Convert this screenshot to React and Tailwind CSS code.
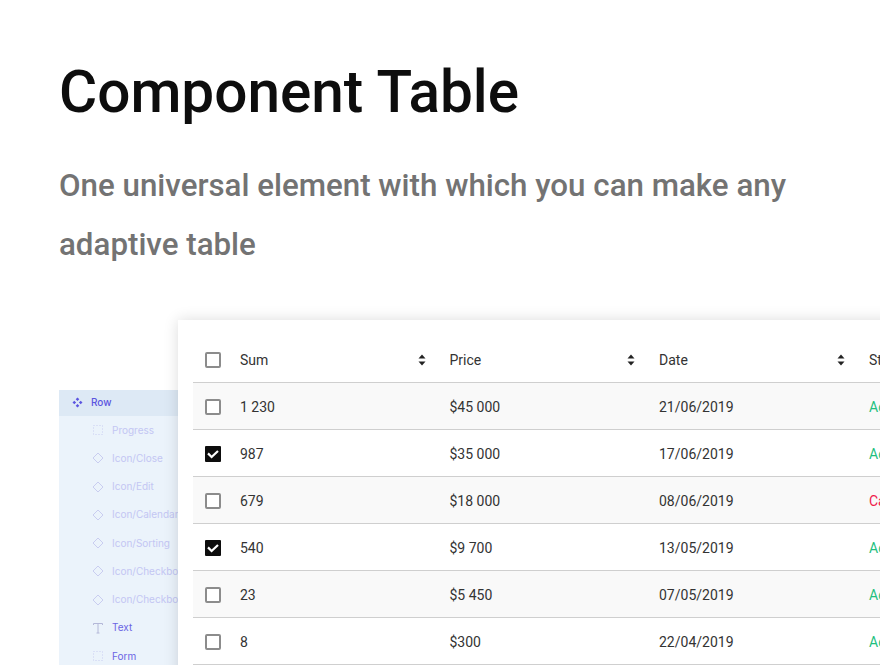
const layers = [
  { name: 'Progress', icon: 'dashed', faded: true },
  { name: 'Icon/Close', icon: 'diamond', faded: true },
  { name: 'Icon/Edit', icon: 'diamond', faded: true },
  { name: 'Icon/Calendar', icon: 'diamond', faded: true },
  { name: 'Icon/Sorting', icon: 'diamond', faded: true },
  { name: 'Icon/Checkbox', icon: 'diamond', faded: true },
  { name: 'Icon/Checkbox', icon: 'diamond', faded: true },
  { name: 'Text', icon: 'text' },
  { name: 'Form', icon: 'dashed' },
];

const rows = [
  { sum: '1 230', price: '$45 000', date: '21/06/2019', status: 'Active' },
  { sum: '987', price: '$35 000', date: '17/06/2019', status: 'Active', checked: true },
  { sum: '679', price: '$18 000', date: '08/06/2019', status: 'Canceled' },
  { sum: '540', price: '$9 700', date: '13/05/2019', status: 'Active', checked: true },
  { sum: '23', price: '$5 450', date: '07/05/2019', status: 'Active' },
  { sum: '8', price: '$300', date: '22/04/2019', status: 'Active' },
];

function LayerIcon({ type }) {
  if (type === 'diamond') {
    return (
      <svg width="12" height="12" viewBox="0 0 12 12" fill="none" stroke="#c9cdf0" strokeWidth="1" className="shrink-0">
        <path d="M6 1 11 6 6 11 1 6Z" />
      </svg>
    );
  }
  if (type === 'text') {
    return (
      <svg width="12" height="12" viewBox="0 0 12 12" fill="none" stroke="#b4b8d8" strokeWidth="1" className="shrink-0">
        <path d="M1.5 3V1.5h9V3M6 1.5v9.5M4.5 11h3" />
      </svg>
    );
  }
  return (
    <svg width="12" height="12" viewBox="0 0 12 12" fill="none" stroke="#c9cdf0" strokeWidth="1" strokeDasharray="1 2" className="shrink-0">
      <rect x="1.5" y="1.5" width="9" height="9" />
    </svg>
  );
}

function Checkbox({ checked }) {
  if (checked) {
    return (
      <svg width="16" height="16" viewBox="0 0 16 16" className="block">
        <rect width="16" height="16" rx="1" fill="#0d0d0d" />
        <path d="M3 7.4 6.6 11 13 5" fill="none" stroke="#fff" strokeWidth="2.2" />
      </svg>
    );
  }
  return <div className="h-4 w-4 rounded-[2px] border-2 border-[#8c8c8c] bg-white" />;
}

function SortIcon() {
  return (
    <svg width="8" height="12" viewBox="0 0 8 12" fill="#222">
      <path d="M4 0.5 7.5 4.5H0.5Z" />
      <path d="M4 11.5 7.5 7.5H0.5Z" />
    </svg>
  );
}

function HeaderCell({ label }) {
  return (
    <div className="flex items-center justify-between pr-[24px]">
      <span>{label}</span>
      <SortIcon />
    </div>
  );
}

export default function App() {
  return (
    <div className="h-[665px] w-[880px] overflow-hidden bg-white font-['Roboto',sans-serif]">
      <div className="pl-[59px] pt-[55px]">
        <h1 className="text-[58.5px] font-medium leading-[74px] text-[#0d0d0d]">Component Table</h1>
        <p className="mt-[27px] w-[760px] text-[31.3px] font-medium leading-[59px] text-[#737373]">
          One universal element with which you can make any adaptive table
        </p>
      </div>

      <div className="mt-[46px] flex pl-[59px]">
        <div className="mt-[70px] h-[400px] w-[119px] shrink-0 overflow-hidden bg-[#ebf3fb] text-[10px]">
          <div className="flex h-[26px] items-center bg-[#dde9f5] pb-[1px] pl-[13px] font-['Inter',sans-serif] font-medium text-[#5b55e0]">
            <svg width="11" height="11" viewBox="0 0 11 11" fill="#5b55e0">
              <path d="M5.5 0.5 7.3 2.3 5.5 4.1 3.7 2.3ZM5.5 6.9 7.3 8.7 5.5 10.5 3.7 8.7ZM2.3 3.7 4.1 5.5 2.3 7.3 0.5 5.5ZM8.7 3.7 10.5 5.5 8.7 7.3 6.9 5.5Z" />
            </svg>
            <span className="ml-[8px]">Row</span>
          </div>
          {layers.map((layer, i) => (
            <div key={i} className="flex h-[28.25px] items-center whitespace-nowrap pl-[33px] font-['Inter',sans-serif]">
              <LayerIcon type={layer.icon} />
              <span className={`ml-[8px] ${layer.faded ? 'text-[#c3c6f3]' : 'text-[#6a64e4]'}`}>{layer.name}</span>
            </div>
          ))}
        </div>

        <div className="w-[760px] shrink-0 bg-white pl-[15px] pt-[16px] text-[14px] leading-[20px] text-[#333] shadow-[0_0_14px_rgba(0,0,0,0.14)]">
          <div className="grid h-[47px] grid-cols-[47px_209.5px_209.5px_210px_1fr] items-center border-b border-[#cfcfcf] pt-[2px]">
            <div className="pl-[12px]"><Checkbox /></div>
            <HeaderCell label="Sum" />
            <HeaderCell label="Price" />
            <HeaderCell label="Date" />
            <span>Status</span>
          </div>
          {rows.map((row, i) => (
            <div
              key={row.date}
              className={`grid h-[47px] grid-cols-[47px_209.5px_209.5px_210px_1fr] items-center border-b border-[#cfcfcf] pt-[2px] ${i % 2 === 0 ? 'bg-[#f9f9f9]' : 'bg-white'}`}
            >
              <div className="pl-[12px]"><Checkbox checked={row.checked} /></div>
              <span>{row.sum}</span>
              <span>{row.price}</span>
              <span>{row.date}</span>
              <span className={row.status === 'Active' ? 'text-[#1fc07f]' : 'text-[#ef1a4b]'}>{row.status}</span>
            </div>
          ))}
        </div>
      </div>
    </div>
  );
}
